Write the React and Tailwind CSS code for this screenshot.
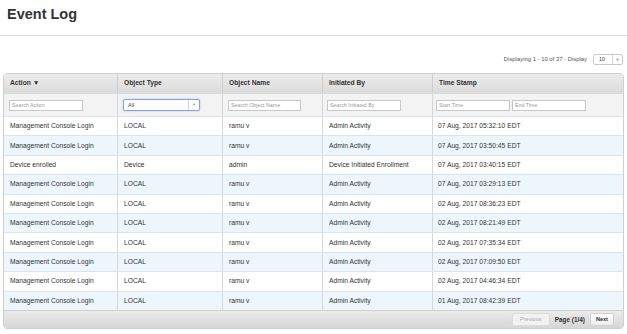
const rows = [
  ["Management Console Login", "LOCAL", "ramu v", "Admin Activity", "07 Aug, 2017 05:32:10 EDT"],
  ["Management Console Login", "LOCAL", "ramu v", "Admin Activity", "07 Aug, 2017 03:50:45 EDT"],
  ["Device enrolled", "Device", "admin", "Device Initiated Enrollment", "07 Aug, 2017 03:40:15 EDT"],
  ["Management Console Login", "LOCAL", "ramu v", "Admin Activity", "07 Aug, 2017 03:29:13 EDT"],
  ["Management Console Login", "LOCAL", "ramu v", "Admin Activity", "02 Aug, 2017 08:36:23 EDT"],
  ["Management Console Login", "LOCAL", "ramu v", "Admin Activity", "02 Aug, 2017 08:21:49 EDT"],
  ["Management Console Login", "LOCAL", "ramu v", "Admin Activity", "02 Aug, 2017 07:35:34 EDT"],
  ["Management Console Login", "LOCAL", "ramu v", "Admin Activity", "02 Aug, 2017 07:09:50 EDT"],
  ["Management Console Login", "LOCAL", "ramu v", "Admin Activity", "02 Aug, 2017 04:46:34 EDT"],
  ["Management Console Login", "LOCAL", "ramu v", "Admin Activity", "01 Aug, 2017 08:42:39 EDT"],
];

const cols = "grid grid-cols-[114px_105px_100px_110px_190px]";

function Input({ placeholder, w }) {
  return (
    <div className={`${w} h-[11px] border border-[#c8c8c8] bg-white pl-[2px] text-[5.3px] leading-[9px] text-[#999]`}>
      {placeholder}
    </div>
  );
}

export default function App() {
  return (
    <div className="w-[627px] h-[334px] bg-white text-[#333] overflow-hidden" style={{ fontFamily: '"Liberation Sans", Arial, sans-serif' }}>

      {/* titulo */}
      <div className="h-[36px] border-b border-[#dcdcdc] pl-[7px] pt-[6px]">
        <h1 className="text-[14.5px] leading-[17px] font-bold text-[#333]">Event Log</h1>
      </div>

      {/* paginacion arriba */}
      <div className="flex justify-end items-center gap-[6px] pr-[4px] mt-[18px] h-[11px]">
        <span className="text-[5.9px] text-[#555]">Displaying 1 - 10 of 37 - Display</span>
        <div className="flex w-[30px] h-[11px] border border-[#c8c8c8] rounded-[2px] bg-white text-[5.5px] text-[#444]">
          <div className="flex-1 flex items-center pl-[5px]">10</div>
          <div className="w-[10px] border-l border-[#d5d5d5] flex items-center justify-center text-[4px] text-[#888]">▼</div>
        </div>
      </div>

      {/* tabla */}
      <div className="mx-[3px] mt-[8px] w-[621px] border border-[#cfcfcf] rounded-[4px] overflow-hidden">

        <div className={`${cols} h-[19px] bg-gradient-to-b from-[#ececec] to-[#dcdcdc] text-[6.7px] font-bold text-[#333]`}>
          <div className="pl-[6px] flex items-center border-r border-[#cdcdcd]">Action ▼</div>
          <div className="pl-[6px] flex items-center border-r border-[#cdcdcd]">Object Type</div>
          <div className="pl-[6px] flex items-center border-r border-[#cdcdcd]">Object Name</div>
          <div className="pl-[6px] flex items-center border-r border-[#cdcdcd]">Initiated By</div>
          <div className="pl-[6px] flex items-center">Time Stamp</div>
        </div>

        <div className={`${cols} h-[23px] bg-[#f3f3f3] border-t border-[#d8d8d8]`}>
          <div className="pl-[5px] flex items-center border-r border-[#d5d5d5]">
            <Input placeholder="Search Action" w="w-[74px]" />
          </div>
          <div className="pl-[5px] flex items-center border-r border-[#d5d5d5]">
            <div className="flex w-[77px] h-[12px] border border-[#7ea6d8] rounded-[2px] bg-white shadow-[0_0_2px_#9fc1ea] text-[5.5px] text-[#444]">
              <div className="flex-1 flex items-center pl-[4px]">All</div>
              <div className="w-[11px] border-l border-[#d5d5d5] flex items-center justify-center text-[4px] text-[#999]">▼</div>
            </div>
          </div>
          <div className="pl-[5px] flex items-center border-r border-[#d5d5d5]">
            <Input placeholder="Search Object Name" w="w-[73px]" />
          </div>
          <div className="pl-[4px] flex items-center border-r border-[#d5d5d5]">
            <Input placeholder="Search Initiated By" w="w-[74px]" />
          </div>
          <div className="pl-[3px] flex items-center gap-[2px]">
            <Input placeholder="Start Time" w="w-[74px]" />
            <Input placeholder="End Time" w="w-[74px]" />
          </div>
        </div>

        {rows.map((r, i) => (
          <div
            key={i}
            className={`${cols} h-[19.4px] border-t border-[#dbe4ec] text-[6.7px] text-[#333] ${i % 2 === 1 ? "bg-[#eef6fd]" : "bg-white"}`}
          >
            <div className="pl-[6px] flex items-center border-r border-[#d3d9de]">{r[0]}</div>
            <div className="pl-[6px] flex items-center border-r border-[#d3d9de]">{r[1]}</div>
            <div className="pl-[6px] flex items-center border-r border-[#d3d9de]">{r[2]}</div>
            <div className="pl-[6px] flex items-center border-r border-[#d3d9de]">{r[3]}</div>
            <div className="pl-[5px] flex items-center">{r[4]}</div>
          </div>
        ))}

        {/* pie */}
        <div className="h-[18px] border-t border-[#d0d0d0] bg-gradient-to-b from-[#ebebeb] to-[#d6d6d6] flex items-center justify-end pr-[9px] gap-[5px]">
          <div className="h-[13px] w-[38px] rounded-[2px] border border-[#dcdcdc] bg-[#f2f2f2] flex items-center justify-center text-[5.5px] text-[#aaa]">Previous</div>
          <span className="text-[6.4px] font-bold text-[#333]">Page (1/4)</span>
          <div className="h-[13px] w-[24px] rounded-[2px] border border-[#d0d0d0] bg-gradient-to-b from-white to-[#ececec] flex items-center justify-center text-[5.5px] font-bold text-[#333]">Next</div>
        </div>
      </div>
    </div>
  );
}
